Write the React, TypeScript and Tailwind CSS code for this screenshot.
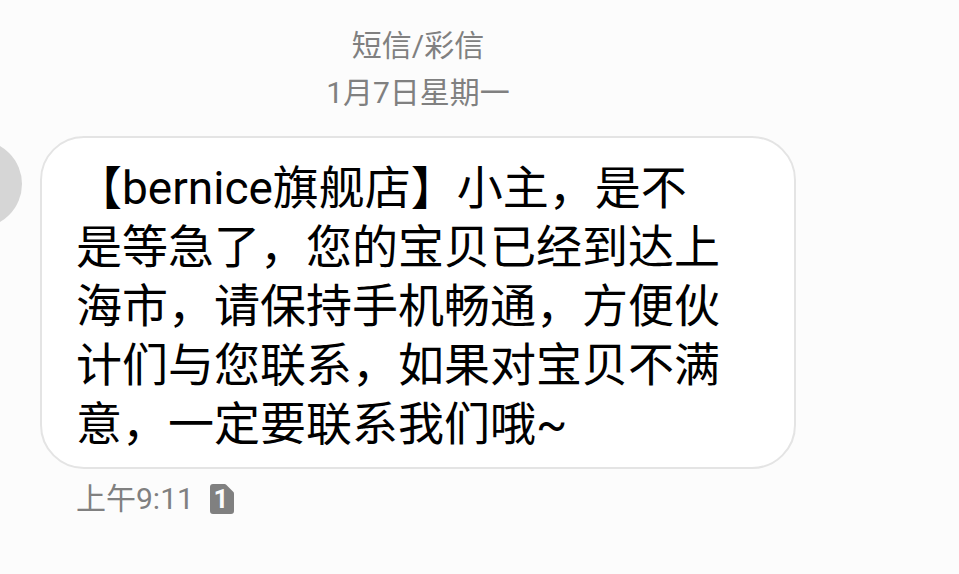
const conversation = {
  channel: '短信/彩信',
  date: '1月7日星期一',
}

const message = {
  lines: [
    '【bernice旗舰店】小主，是不',
    '是等急了，您的宝贝已经到达上',
    '海市，请保持手机畅通，方便伙',
    '计们与您联系，如果对宝贝不满',
    '意，一定要联系我们哦~',
  ],
  time: '上午9:11',
}

const SimIcon = () => (
  <svg viewBox="0 0 24 30" className="h-[30px] w-6 overflow-visible" role="img" aria-label="SIM 1">
    <path
      d="M3 0h11.500q1 0 1.700.700l7 7q.800.800.800 1.800V27a3 3 0 0 1-3 3H3a3 3 0 0 1-3-3V3a3 3 0 0 1 3-3z"
      fill="#808080"
    />
    <text x="11" y="24" textAnchor="middle" fontSize="26" fontWeight="700" fill="#fcfcfc">
      1
    </text>
  </svg>
)

export default function App() {
  return (
    <main
      lang="zh-CN"
      className="min-h-screen overflow-hidden bg-[#fcfcfc] font-[Roboto,'Noto_Sans_CJK_SC',sans-serif]"
    >
      <header className="flex flex-col items-center pt-[22px] pr-[123px] text-[30px] leading-[47px] text-[#808080]">
        <p>{conversation.channel}</p>
        <p>{conversation.date}</p>
      </header>
      <section className="mt-5 flex items-start pr-[163px]">
        <div className="mt-1 -ml-[66px] size-22 shrink-0 rounded-full bg-[#d6d6d6]" />
        <article className="ml-[18px] min-w-0 flex-1">
          <p className="rounded-[44px] border-2 border-[#e4e4e4] bg-white pt-[21px] pr-[70px] pb-[13px] pl-[34px] text-[46px] leading-[59px] text-black">
            {message.lines.map((line) => (
              <span key={line} className="block">
                {line}
              </span>
            ))}
          </p>
          <footer className="flex items-center gap-4 pt-[7px] pl-9 text-[30px] leading-[46px] text-[#808080]">
            <time>{message.time}</time>
            <SimIcon />
          </footer>
        </article>
      </section>
    </main>
  )
}
